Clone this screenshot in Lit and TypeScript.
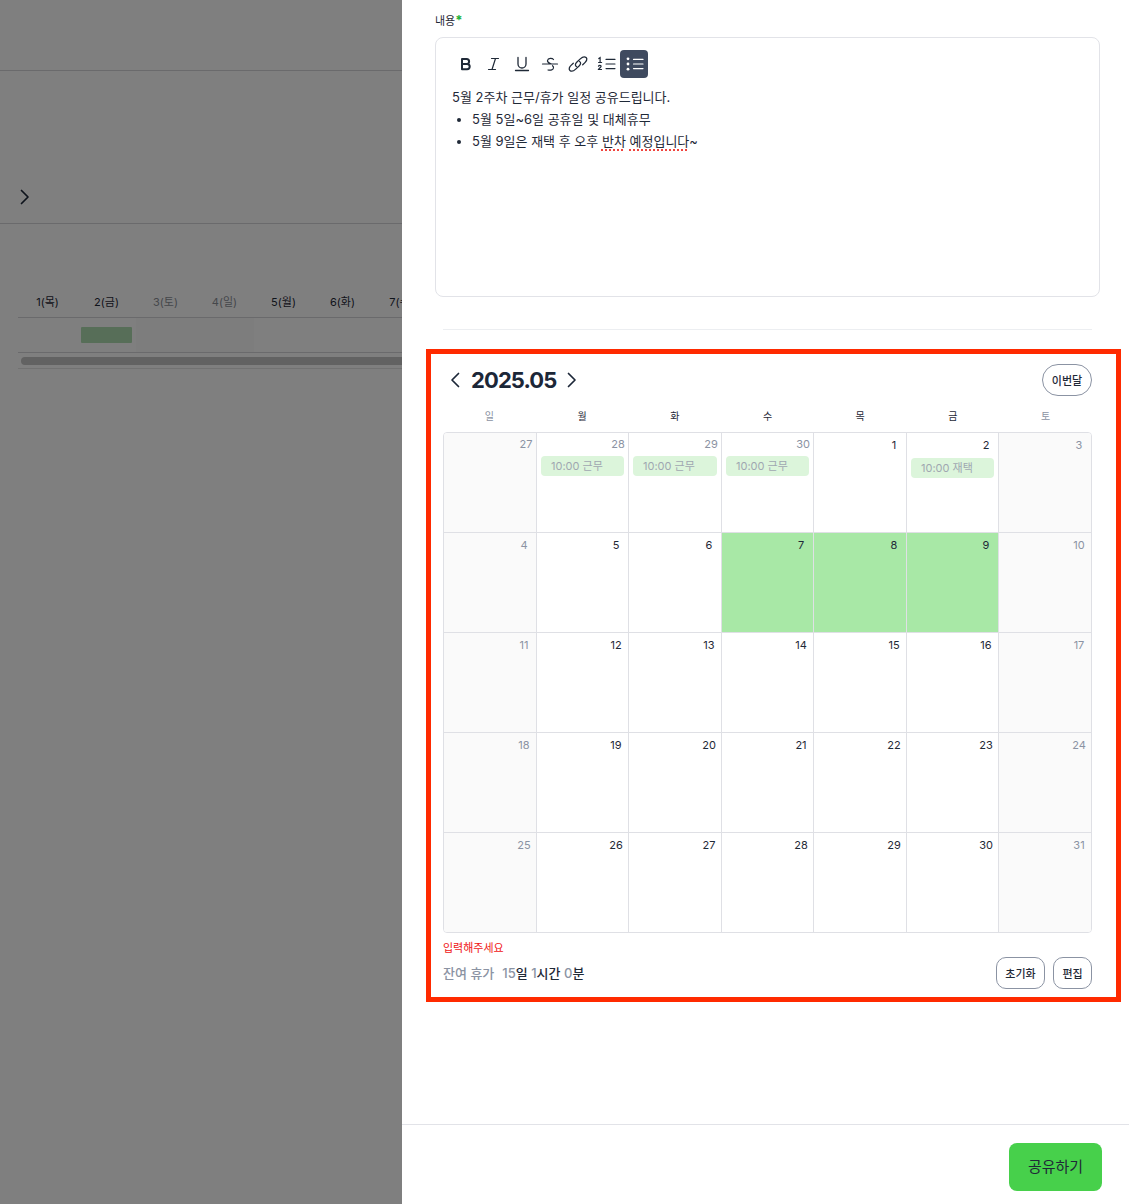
import { LitElement, html, css, nothing } from 'lit';
import { customElement } from 'lit/decorators.js';

interface Day {
  n: number;
  kind: 'off' | 'work';
  picked?: boolean;
  edge?: boolean;
  muted?: boolean;
  event?: string;
  low?: boolean;
}

const W: Day['kind'] = 'work';
const O: Day['kind'] = 'off';

const weeks: Day[][] = [
  [
    { n: 27, kind: O, edge: true },
    { n: 28, kind: W, edge: true, muted: true, event: '10:00 근무' },
    { n: 29, kind: W, edge: true, muted: true, event: '10:00 근무' },
    { n: 30, kind: W, edge: true, muted: true, event: '10:00 근무' },
    { n: 1, kind: W },
    { n: 2, kind: W, low: true, event: '10:00 재택' },
    { n: 3, kind: O },
  ],
  [
    { n: 4, kind: O },
    { n: 5, kind: W },
    { n: 6, kind: W },
    { n: 7, kind: W, picked: true },
    { n: 8, kind: W, picked: true },
    { n: 9, kind: W, picked: true },
    { n: 10, kind: O },
  ],
  [11, 12, 13, 14, 15, 16, 17].map((n, i) => ({ n, kind: i % 6 ? W : O })),
  [18, 19, 20, 21, 22, 23, 24].map((n, i) => ({ n, kind: i % 6 ? W : O })),
  [25, 26, 27, 28, 29, 30, 31].map((n, i) => ({ n, kind: i % 6 ? W : O })),
];

const dayNames = ['일', '월', '화', '수', '목', '금', '토'];
const bgDays = ['1(목)', '2(금)', '3(토)', '4(일)', '5(월)', '6(화)', '7(수)'];

const chevron = (dir: 'l' | 'r') => html`
  <svg class="chev" width="20" height="20" viewBox="0 0 20 20" fill="none" stroke="currentColor" stroke-width="1.7" stroke-linecap="round" stroke-linejoin="round">
    <path d=${dir === 'l' ? 'M13.5 3.5L7 10l6.5 6.5' : 'M6.5 3.5L13 10l-6.5 6.5'}></path>
  </svg>`;

@customElement('app-root')
export class AppRoot extends LitElement {
  static styles = css`
    :host {
      display: block;
      font-family: Inter, 'Noto Sans CJK KR', sans-serif;
      color: #1f2937;
    }
    .page {
      display: flex;
      height: 1204px;
      overflow: hidden;
    }

    /* page behind the drawer */
    .behind {
      position: relative;
      width: 402px;
      flex: none;
      overflow: hidden;
      background: #fff;
      padding-top: 70px;
      box-sizing: border-box;
    }
    .scrim {
      position: absolute;
      inset: 0;
      background: rgba(0, 0, 0, 0.5);
    }
    .bg-band {
      height: 154px;
      border-top: 1px solid #d4d4d8;
      border-bottom: 1px solid #d4d4d8;
      box-sizing: border-box;
      display: flex;
      align-items: flex-end;
      padding: 0 0 16px 15px;
      color: #111827;
    }
    .bg-table {
      margin: 64px 0 0 18px;
      width: 500px;
    }
    .bg-head {
      display: flex;
      height: 30px;
      border-bottom: 1px solid #d4d4d8;
      box-sizing: border-box;
    }
    .bg-head span {
      width: 59px;
      flex: none;
      text-align: center;
      font-size: 11px;
      line-height: 28px;
      color: #1f2937;
    }
    .bg-head span.weekend {
      color: #8b8f97;
    }
    .bg-row {
      display: flex;
      height: 35px;
      border-bottom: 1px solid #d4d4d8;
      box-sizing: border-box;
    }
    .bg-cell {
      width: 59px;
      flex: none;
      box-sizing: border-box;
      padding: 9px 4px 0;
    }
    .bg-cell.weekend {
      background: #fafafa;
    }
    .bg-bar {
      height: 16px;
      border-radius: 1px;
      background: #aedcb1;
    }
    .bg-track {
      height: 16px;
      border-bottom: 1px solid #e5e5e5;
      padding: 4px 3px 0;
      box-sizing: border-box;
    }
    .bg-thumb {
      height: 8px;
      border-radius: 4px;
      background: #c4c4c4;
    }

    /* drawer */
    .drawer {
      flex: 1;
      min-width: 0;
      background: #fff;
      display: flex;
      flex-direction: column;
    }
    .drawer-body {
      flex: 1;
      padding: 13px 29px 0 33px;
    }
    .label {
      height: 14px;
      font-size: 11px;
      line-height: 14px;
      color: #1f2937;
    }
    .label b {
      color: #22b33c;
      font-size: 13px;
      line-height: 14px;
      font-weight: 700;
    }
    .editor {
      margin-top: 10px;
      height: 260px;
      box-sizing: border-box;
      border: 1px solid #e2e3e8;
      border-radius: 8px;
      padding: 12px 16px;
    }
    .toolbar {
      display: flex;
      height: 28px;
    }
    .tool {
      width: 28px;
      height: 28px;
      display: flex;
      align-items: center;
      justify-content: center;
      color: #1f2937;
      border-radius: 4px;
    }
    .tool.on {
      background: #3f4a5f;
      color: #fff;
    }
    .content {
      margin-top: 8px;
      font-size: 13px;
      line-height: 22px;
      color: #1f2937;
    }
    .content ul {
      margin: 0;
      padding: 0 0 0 20px;
    }
    .squiggle {
      text-decoration: underline dotted #f0443e 1.5px;
      text-underline-offset: 3px;
    }
    .divider {
      height: 1px;
      background: #eceef1;
      margin: 32px 8px 0;
    }
    .calendar {
      margin: 19px -21px 0 -9px;
      border: 5px solid #ff2a00;
      padding: 10px 24px 12px 12px;
      height: 653px;
      box-sizing: border-box;
    }
    .cal-top {
      display: flex;
      align-items: center;
      height: 32px;
    }
    .cal-top > .chev:first-child {
      margin-left: 2px;
    }
    .cal-top h2 {
      margin: 0 6px;
      font-size: 22px;
      line-height: 32px;
      font-weight: 700;
      color: #1c2738;
      letter-spacing: -0.9px;
    }
    .chev {
      color: #1c2738;
    }
    .btn {
      font: inherit;
      background: #fff;
      color: #1f2937;
      border: 1px solid #8b93a3;
      height: 32px;
      padding: 0;
      font-size: 11px;
      font-weight: 500;
      box-sizing: border-box;
      border-radius: 10px;
    }
    .this-month {
      margin-left: auto;
      width: 50px;
      border-radius: 16px;
    }
    .names {
      display: grid;
      grid-template-columns: repeat(7, 1fr);
      margin-top: 3px;
      height: 33px;
      align-items: center;
      text-align: center;
      font-size: 10px;
      color: #1f2937;
    }
    .names .dim {
      color: #8b93a3;
    }
    .grid {
      display: grid;
      grid-template-columns: 92px 92px 93px 92px 93px 92px 93px;
      grid-template-rows: 99px repeat(4, 100px);
      border: 1px solid #dfe0e5;
      border-radius: 4px;
      overflow: hidden;
      height: 501px;
      box-sizing: border-box;
    }
    .cell {
      border-left: 1px solid #dfe0e5;
      border-top: 1px solid #dfe0e5;
      box-sizing: border-box;
      padding: 5px 4px 0;
      font-size: 11px;
      line-height: 14px;
      text-align: right;
      color: #1f2937;
      min-width: 0;
    }
    .cell:nth-child(7n + 1) {
      border-left: 0;
    }
    .cell:nth-child(-n + 7) {
      border-top: 0;
    }
    .cell.off {
      background: #fafafa;
      color: #8b93a3;
    }
    .cell.muted {
      color: #8b93a3;
    }
    .cell.picked {
      background: #a8e8a6;
    }
    .cell.edge {
      padding-top: 4px;
    }
    .num {
      display: block;
      width: 16px;
      margin-left: auto;
      text-align: center;
    }
    .cell.edge .num {
      margin-right: -2px;
    }
    .event {
      display: block;
      margin-top: 5px;
      height: 20px;
      border-radius: 4px;
      background: #dcf5db;
      color: #a0a7b1;
      font-size: 11px;
      line-height: 20px;
      text-align: left;
      padding-left: 10px;
      white-space: nowrap;
    }
    .cell.low .event {
      margin-top: 6px;
    }
    .error {
      margin-top: 7px;
      font-size: 11px;
      line-height: 16px;
      color: #f01414;
    }
    .bottom {
      display: flex;
      align-items: center;
      height: 32px;
      margin-top: 1px;
      font-size: 13px;
      font-weight: 500;
      color: #1f2937;
    }
    .bottom .grey {
      color: #8b93a3;
    }
    .bottom > span {
      margin-top: -2px;
    }
    .remain {
      margin-right: 8px;
    }
    .actions {
      margin-left: auto;
      display: flex;
      gap: 8px;
    }
    .actions .reset {
      width: 49px;
    }
    .actions .edit {
      width: 39px;
    }
    .footer {
      height: 80px;
      box-sizing: border-box;
      border-top: 1px solid #e2e3e8;
      display: flex;
      justify-content: flex-end;
      align-items: flex-start;
      padding: 18px 27px 0 0;
    }
    .share {
      font: inherit;
      width: 93px;
      height: 48px;
      border: 0;
      padding: 0 0 3px;
      border-radius: 8px;
      background: #47d04b;
      color: #1f2937;
      font-size: 15px;
    }
  `;

  private renderBehind() {
    return html`
      <div class="behind">
        <div class="bg-band">${chevron('r')}</div>
        <div class="bg-table">
          <div class="bg-head">
            ${bgDays.map((d, i) => html`<span class=${i === 2 || i === 3 ? 'weekend' : ''}>${d}</span>`)}
          </div>
          <div class="bg-row">
            ${bgDays.map(
              (_, i) => html`<div class="bg-cell ${i === 2 || i === 3 ? 'weekend' : ''}">
                ${i === 1 ? html`<div class="bg-bar"></div>` : nothing}
              </div>`
            )}
          </div>
          <div class="bg-track"><div class="bg-thumb"></div></div>
        </div>
        <div class="scrim"></div>
      </div>
    `;
  }

  private renderToolbar() {
    return html`
      <div class="toolbar">
        <div class="tool">
          <svg width="18" height="18" viewBox="0 0 18 18" fill="none" stroke="currentColor" stroke-width="2" stroke-linejoin="round">
            <path d="M5 4h4.6a2.5 2.5 0 0 1 0 5H5zM5 9h5.1a2.6 2.6 0 0 1 0 5.2H5z"></path>
          </svg>
        </div>
        <div class="tool">
          <svg width="18" height="18" viewBox="0 0 18 18" fill="none" stroke="currentColor" stroke-width="1.2" stroke-linecap="round">
            <path d="M6.5 3.5h7M3.5 14.5h7M10.5 3.5L7 14.5"></path>
          </svg>
        </div>
        <div class="tool">
          <svg width="18" height="18" viewBox="0 0 18 18" fill="none" stroke="currentColor" stroke-width="1.3" stroke-linecap="round">
            <path d="M5 2.5v6.5a4 4 0 0 0 8 0V2.5M2.5 15.5h13"></path>
          </svg>
        </div>
        <div class="tool">
          <svg width="18" height="18" viewBox="0 0 18 18" fill="none" stroke="currentColor" stroke-width="1.2" stroke-linecap="round">
            <path d="M12.5 4.5c-1-1.3-5.5-1.8-6 1 -.4 2.2 2.5 2.8 3.6 3.3M1.5 9h15M7 15c2.5.6 5.6-.1 5.5-2.4 0-.9-.4-1.4-1-1.9"></path>
          </svg>
        </div>
        <div class="tool">
          <svg width="22" height="20" viewBox="0 0 22 20" fill="none" stroke="currentColor" stroke-width="1.3" stroke-linecap="round">
            <path d="M9.5 12.5c-1.6-.6-1.4-2.6.2-4.2l3.6-3.4c2-1.9 4.4-2.5 5.8-1.3 1.4 1.2.6 3.4-1.4 5.3l-2 1.9"></path>
            <path d="M12.5 7.5c1.6.6 1.4 2.6-.2 4.2l-3.6 3.4c-2 1.9-4.4 2.5-5.8 1.3-1.4-1.2-.6-3.4 1.4-5.3l2-1.9"></path>
          </svg>
        </div>
        <div class="tool">
          <svg width="20" height="20" viewBox="0 0 20 20" fill="none" stroke="currentColor" stroke-width="1.1" stroke-linecap="round">
            <path d="M2.8 4.6l1.3-.9v4.8M2.6 8.5h3" stroke-width="1.2"></path>
            <path d="M2.5 12.2c.4-1.2 2.7-1 2.6.3-.1 1-1.9 1.4-2.6 3h3" stroke-width="1.2"></path>
            <path d="M10 5.4h9M10 10h9M10 14.6h9"></path>
          </svg>
        </div>
        <div class="tool on">
          <svg width="20" height="20" viewBox="0 0 20 20" fill="none" stroke="currentColor" stroke-width="1.2" stroke-linecap="round">
            <circle cx="4" cy="4.8" r="1.4" fill="currentColor" stroke="none"></circle>
            <circle cx="4" cy="10" r="1.4" fill="currentColor" stroke="none"></circle>
            <circle cx="4" cy="15.2" r="1.4" fill="currentColor" stroke="none"></circle>
            <path d="M9.5 5.4h9.5M9.5 10h9.5M9.5 14.6h9.5"></path>
          </svg>
        </div>
      </div>
    `;
  }

  private renderCalendar() {
    return html`
      <section class="calendar">
        <div class="cal-top">
          ${chevron('l')}
          <h2>2025.05</h2>
          ${chevron('r')}
          <button class="btn this-month">이번달</button>
        </div>
        <div class="names">
          ${dayNames.map((d, i) => html`<span class=${i % 6 ? '' : 'dim'}>${d}</span>`)}
        </div>
        <div class="grid">
          ${weeks.flat().map(
            (d) => html`
              <div class="cell ${d.kind === 'off' ? 'off' : ''} ${d.muted ? 'muted' : ''} ${d.picked ? 'picked' : ''} ${d.edge ? 'edge' : ''} ${d.low ? 'low' : ''}">
                <span class="num">${d.n}</span>
                ${d.event ? html`<span class="event">${d.event}</span>` : nothing}
              </div>
            `
          )}
        </div>
        <div class="error">입력해주세요</div>
        <div class="bottom">
          <span class="grey remain">잔여 휴가</span>
          <span><span class="grey">15</span>일 <span class="grey">1</span>시간 <span class="grey">0</span>분</span>
          <div class="actions">
            <button class="btn reset">초기화</button>
            <button class="btn edit">편집</button>
          </div>
        </div>
      </section>
    `;
  }

  render() {
    return html`
      <div class="page">
        ${this.renderBehind()}
        <div class="drawer">
          <div class="drawer-body">
            <div class="label">내용<b>*</b></div>
            <div class="editor">
              ${this.renderToolbar()}
              <div class="content">
                5월 2주차 근무/휴가 일정 공유드립니다.
                <ul>
                  <li>5월 5일~6일 공휴일 및 대체휴무</li>
                  <li>5월 9일은 재택 후 오후 <span class="squiggle">반차</span> <span class="squiggle">예정입니다</span>~</li>
                </ul>
              </div>
            </div>
            <div class="divider"></div>
            ${this.renderCalendar()}
          </div>
          <div class="footer">
            <button class="share">공유하기</button>
          </div>
        </div>
      </div>
    `;
  }
}
